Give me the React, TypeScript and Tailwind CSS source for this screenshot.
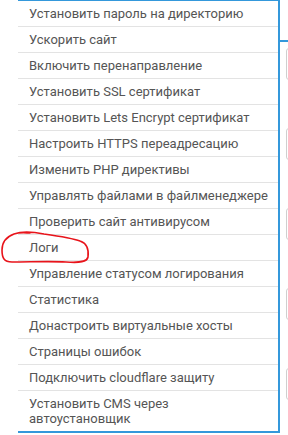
import React from "react";

const items: string[] = [
  "Установить пароль на директорию",
  "Ускорить сайт",
  "Включить перенаправление",
  "Установить SSL сертификат",
  "Установить Lets Encrypt сертификат",
  "Настроить HTTPS переадресацию",
  "Изменить PHP директивы",
  "Управлять файлами в файлменеджере",
  "Проверить сайт антивирусом",
  "Логи",
  "Управление статусом логирования",
  "Статистика",
  "Донастроить виртуальные хосты",
  "Страницы ошибок",
  "Подключить cloudflare защиту",
];

const App: React.FC = () => {
  return (
    <div
      className="relative flex h-[435px] w-[288px] overflow-hidden bg-white"
      style={{ fontFamily: "Roboto, 'Liberation Sans', sans-serif" }}
    >
      <div className="w-[18px] shrink-0" />
      {/* dropdown menu */}
      <div className="flex h-[433px] w-[262px] shrink-0 flex-col border-t border-r-2 border-b-2 border-[#3498db] bg-white">
        {items.map((label) => (
          <div
            key={label}
            className="border-b border-[#e3e3e3] py-[5px] pl-[11px] pr-[10px] text-[13px] leading-[15px] text-[#555]"
          >
            {label}
          </div>
        ))}
        <div className="py-[5px] pl-[11px] pr-[10px] text-[13px] leading-[15px] text-[#555]">
          Установить CMS через
          <br />
          автоустановщик
        </div>
      </div>
      {/* page behind the menu */}
      <div className="flex w-[8px] shrink-0 flex-col pt-[40px]">
        <div className="h-[2px] w-full bg-[#3498db]" />
        <div className="ml-[6px] mt-[6px] h-[32px] w-[10px] shrink-0 rounded-[3px] border border-[#cfcfcf]" />
        <div className="ml-[6px] mt-[48px] h-[32px] w-[10px] shrink-0 rounded-[3px] border border-[#cfcfcf]" />
        <div className="ml-[6px] mt-[48px] h-[32px] w-[10px] shrink-0 rounded-[3px] border border-[#cfcfcf]" />
        <div className="ml-[6px] mt-[48px] h-[32px] w-[10px] shrink-0 rounded-[3px] border border-[#cfcfcf]" />
        <div className="ml-[6px] mt-[48px] h-[32px] w-[10px] shrink-0 rounded-[3px] border border-[#cfcfcf]" />
      </div>
      {/* red hand-drawn annotation */}
      <svg
        className="pointer-events-none absolute left-0 top-[228px]"
        width="95"
        height="40"
        viewBox="0 0 95 40"
        fill="none"
      >
        <path
          d="M14 6 C 22 3, 34 4, 44 6 C 58 8, 72 10, 80 13 C 86 15, 89 21, 88 29 C 87 34, 80 35, 66 34 C 50 33, 30 34, 12 34 C 4 34, 2 30, 2 22 C 2 14, 6 9, 14 6 C 20 4, 26 5, 30 5"
          stroke="#e8141b"
          strokeWidth="1.6"
          strokeLinecap="round"
        />
      </svg>
    </div>
  );
};

export default App;
